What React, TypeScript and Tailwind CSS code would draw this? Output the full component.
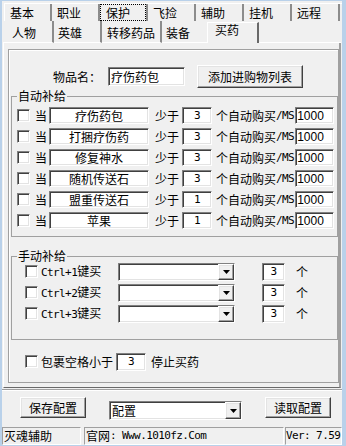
import type { ReactNode } from 'react';

const sunken =
  'bg-white border border-t-[#808080] border-l-[#808080] border-r-white border-b-white shadow-[inset_1px_1px_0_#404040,inset_-1px_-1px_0_#e3e3e3]';
const raised =
  'bg-[#f0f0f0] border border-t-white border-l-white border-r-[#404040] border-b-[#404040] shadow-[inset_-1px_-1px_0_#a0a0a0,inset_1px_1px_0_#e3e3e3]';
const mono = "font-['DejaVu_Sans_Mono',monospace] text-[11px] tracking-[-0.6px] whitespace-nowrap";
const thinSunken = 'border border-t-[#a0a0a0] border-l-[#a0a0a0] border-r-white border-b-white whitespace-nowrap overflow-hidden';

function CheckBox({ className = '' }: { className?: string }) {
  return <div className={`w-[13px] h-[13px] shrink-0 ${sunken} ${className}`} />;
}

function Arrow() {
  return (
    <div className={`w-[16px] h-full shrink-0 flex items-center justify-center ${raised}`}>
      <svg width="7" height="4" viewBox="0 0 7 4">
        <path d="M0 0h7L3.5 4z" fill="#000" />
      </svg>
    </div>
  );
}

function Combo({ className, children }: { className: string; children?: ReactNode }) {
  return (
    <div className={`flex items-stretch shrink-0 ${sunken} ${className}`}>
      <div className="flex-1 flex items-center pl-[2px]">{children}</div>
      <Arrow />
    </div>
  );
}

const topTabs = ['基本', '职业', '保护', '飞捡', '辅助', '挂机', '远程'];

const autoRows = [
  { name: '疗伤药包', n: '3' },
  { name: '打捆疗伤药', n: '3' },
  { name: '修复神水', n: '3' },
  { name: '随机传送石', n: '3' },
  { name: '盟重传送石', n: '1' },
  { name: '苹果', n: '1' },
];

export default function App() {
  return (
    <div className="w-[346px] h-[446px] bg-[#f0f0f0] border-l-2 border-r-4 border-t border-b border-[#b9d1ea] flex flex-col text-[12px] leading-[14px] text-black font-['Noto_Sans_CJK_SC',sans-serif] overflow-hidden">
      {/* tab row 1 */}
      <div className="flex mt-[2px] ml-[2px] h-[18px] border-t border-t-white">
        {topTabs.map((t, i) => (
          <div
            key={t}
            className={`w-[48px] h-full flex border-r-2 border-r-[#8c8c8c] ${i === 0 ? 'border-l border-l-white' : ''}`}
          >
            {t === '保护' ? (
              <div className="flex-1 flex items-center pl-[5px] border border-dotted border-black">{t}</div>
            ) : (
              <div className="flex-1 flex items-center pl-[5px]">{t}</div>
            )}
          </div>
        ))}
      </div>

      {/* tab row 2 */}
      <div className="flex ml-[1px] w-[338px] h-[22px]">
        <div className="w-[51px] h-full flex items-center pt-[3px] pl-[9px] border-b border-b-white border-r-2 border-r-[#8c8c8c]">人物</div>
        <div className="w-[48px] h-full flex items-center pt-[3px] pl-[4px] border-b border-b-white border-r-2 border-r-[#8c8c8c]">英雄</div>
        <div className="w-[60px] h-full flex items-center pt-[3px] pl-[5px] border-b border-b-white border-r-2 border-r-[#8c8c8c]">转移药品</div>
        <div className="w-[45px] h-full flex items-center pt-[3px] pl-[4px] border-b border-b-white">装备</div>
        <div className="w-[52px] h-[21px] mt-[1px] pl-[7px] border-t border-l border-t-white border-l-white border-r-2 border-r-[#696969]">买药</div>
        <div className="flex-1 h-full border-b border-b-white" />
      </div>

      {/* tab page */}
      <div className="ml-[1px] w-[338px] h-[345px] pt-[6px] border-l border-l-white border-r-2 border-r-[#a0a0a0] border-b border-b-[#696969]">
        <div className="ml-[4px] w-[331px] h-[334px] border border-[#a0a0a0] shadow-[inset_1px_1px_0_white] flex flex-col">
          <div className="flex items-center h-[23px] mt-[15px]">
            <span className="ml-[44px]">物品名：</span>
            <div className={`ml-[7px] w-[77px] h-[19px] flex items-center pl-[2px] ${sunken}`}>疗伤药包</div>
            <div className={`ml-[12px] w-[106px] h-[23px] flex items-center justify-center ${raised}`}>添加进购物列表</div>
          </div>

          <fieldset className="ml-[2px] mt-[2px] w-[327px] border border-[#a0a0a0] pt-[3px] pb-[5px]">
            <legend className="ml-[5px] px-[1px] leading-[12px]">自动补给</legend>
            {autoRows.map((r) => (
              <div key={r.name} className="flex items-center h-[21px]">
                <CheckBox className="ml-[5px]" />
                <span className="ml-[5px]">当</span>
                <div className={`ml-[2px] w-[100px] h-[17px] flex items-center justify-center ${sunken}`}>{r.name}</div>
                <span className="ml-[6px]">少于</span>
                <div className={`ml-[3px] w-[30px] h-[17px] flex items-center justify-center ${sunken} ${mono}`}>{r.n}</div>
                <span className="ml-[4px]">个自动购买</span>
                <span className={mono}>/MS</span>
                <div className={`ml-[1px] w-[39px] h-[17px] flex items-center pl-[1px] ${sunken} font-['Liberation_Sans',sans-serif]`}>1000</div>
              </div>
            ))}
          </fieldset>

          <fieldset className="ml-[2px] mt-[13px] w-[327px] border border-[#a0a0a0] pb-[15px]">
            <legend className="ml-[5px] px-[1px] leading-[12px]">手动补给</legend>
            <div className="-mt-[1px]">
              {['1', '2', '3'].map((k) => (
                <div key={k} className="flex items-center h-[21px]">
                  <CheckBox className="ml-[13px]" />
                  <div className="ml-[3px] w-[77px] shrink-0 whitespace-nowrap">
                    <span className={mono}>Ctrl+{k}</span>键买
                  </div>
                  <Combo className="w-[117px] h-[18px]" />
                  <div className={`ml-[27px] w-[23px] h-[18px] flex items-center justify-center ${sunken} ${mono}`}>3</div>
                  <span className="ml-[11px]">个</span>
                </div>
              ))}
            </div>
          </fieldset>

          <div className="flex items-center h-[21px] mt-[11px]">
            <CheckBox className="ml-[16px]" />
            <span className="ml-[3px]">包裹空格小于</span>
            <div className={`ml-[3px] w-[30px] h-[18px] flex items-center justify-center ${sunken} ${mono}`}>3</div>
            <span className="ml-[5px]">停止买药</span>
          </div>
        </div>
      </div>

      <div className="mt-[1px] h-[2px] border-t border-t-[#a0a0a0] border-b border-b-white" />

      {/* bottom buttons */}
      <div className="flex items-start mt-[6px]">
        <div className={`ml-[18px] w-[66px] h-[21px] flex items-center justify-center ${raised}`}>保存配置</div>
        <Combo className="ml-[23px] mt-[4px] w-[133px] h-[19px]">配置</Combo>
        <div className={`ml-[23px] w-[66px] h-[21px] flex items-center justify-center ${raised}`}>读取配置</div>
      </div>

      {/* status bar */}
      <div className="mt-auto flex h-[18px]">
        <div className={`w-[79px] h-full flex items-center pl-[1px] ${thinSunken}`}>灭魂辅助</div>
        <div className={`ml-[3px] w-[200px] h-full flex items-center pl-[1px] ${thinSunken}`}>
          官网<span className={mono}>: Www.1010fz.Com</span>
        </div>
        <div className={`ml-[1px] w-[57px] h-full flex items-center ${thinSunken}`}>
          <span className={mono}>Ver: 7.59</span>
        </div>
      </div>
    </div>
  );
}
